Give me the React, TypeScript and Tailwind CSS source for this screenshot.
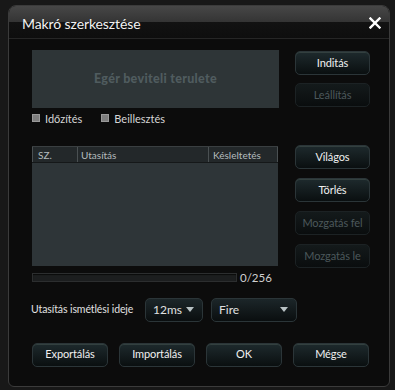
import React from "react";

const font = { fontFamily: "Lato, 'Noto Sans', sans-serif" };

function Btn({ label, disabled = false, w = "w-[75px]" }: { label: string; disabled?: boolean; w?: string }) {
  return (
    <div
      className={`${w} h-[24px] rounded-[5px] border flex items-center justify-center text-[11px] tracking-[-0.1px] ${
        disabled
          ? "border-[#1c2224] bg-[linear-gradient(to_bottom,#141a1b,#0a0d0e)] text-[#4c585b]"
          : "border-[#2b3538] bg-[linear-gradient(to_bottom,#1e2a2d,#0a0f10)] text-[#f0f0f0] shadow-[inset_0_1px_0_#33403f]"
      }`}
    >
      {label}
    </div>
  );
}

function Drop({ label, w }: { label: string; w: string }) {
  return (
    <div
      className={`${w} h-[24px] rounded-[5px] border border-[#2b3538] bg-[linear-gradient(to_bottom,#1c2629,#0a0e0f)] flex items-center justify-between pl-[7px] pr-[8px] text-[12px] text-[#e0e0e0]`}
    >
      <span>{label}</span>
      <svg width="8" height="5" viewBox="0 0 8 5">
        <path d="M0 0 H8 L4 5 Z" fill="#b8c2c4" />
      </svg>
    </div>
  );
}

function Check({ label }: { label: string }) {
  return (
    <div className="flex items-center gap-[5px]">
      <div className="w-[8px] h-[8px] bg-[#7e7e7e] border border-[#9a9a9a]" />
      <span className="text-[11px] text-[#d6d6d6] leading-none">{label}</span>
    </div>
  );
}

export default function App() {
  return (
    <div
      className="w-[395px] h-[390px] bg-[#181818] pt-[5px] pl-[8px] pr-[5px] pb-[3px]"
      style={font}
    >
      <div className="w-full h-full rounded-t-[8px] rounded-b-[6px] border border-[#3b3b3b] bg-[#0c0c0c] flex flex-col overflow-hidden">
        {/* Title bar */}
        <div className="h-[33px] shrink-0 bg-[linear-gradient(to_bottom,#474747_0%,#343434_50%,#121212_50%,#0e0e0e_100%)] border-b border-[#262626] flex items-center justify-between pl-[13px] pr-[8px]">
          <span className="text-[14px] text-[#f2f2f2] mt-[2px] tracking-[-0.1px]">Makró szerkesztése</span>
          <svg width="12" height="12" viewBox="0 0 12 12" className="mt-[2px]">
            <path d="M1.5 1.5 L10.5 10.5 M10.5 1.5 L1.5 10.5" stroke="#ffffff" strokeWidth="2.4" strokeLinecap="square" />
          </svg>
        </div>

        {/* Body */}
        <div className="flex-1 pl-[23px] pr-[19px] pt-[11px] flex flex-col">
          {/* Section A */}
          <div className="flex gap-[16px]">
            <div className="w-[247px] flex flex-col">
              <div className="h-[58px] bg-[#2e3537] flex items-center justify-center">
                <span className="text-[12.5px] font-black text-[#505c5f] tracking-[0.3px]">Egér beviteli terulete</span>
              </div>
              <div className="flex items-center gap-[19px] mt-[5px] h-[10px]">
                <Check label="Időzítés" />
                <Check label="Beillesztés" />
              </div>
            </div>
            <div className="flex flex-col gap-[8px] pt-[1px]">
              <Btn label="Inditás" />
              <Btn label="Leállítás" disabled />
            </div>
          </div>

          {/* Section B */}
          <div className="flex gap-[16px] mt-[23px]">
            <div className="w-[247px] flex flex-col">
              <div className="h-[120px] w-[246px] flex flex-col bg-[#2e3538] border-t border-[#3a3f41]">
                <div className="h-[16px] bg-[#23282a] border-b border-[#151819] flex items-center text-[10px] text-[#b4bcbe] leading-none">
                  <div className="w-[45px] h-full border-l border-[#4a5052] pl-[5px] flex items-center">SZ.</div>
                  <div className="w-[131px] h-full border-l border-[#4a5052] pl-[3px] flex items-center">Utasítás</div>
                  <div className="flex-1 h-full border-l border-r border-[#4a5052] pl-[4px] flex items-center">Késleltetés</div>
                </div>
              </div>
              <div className="flex items-center mt-[6px]">
                <div className="w-[205px] h-[9px] bg-[#1c1e1f] border border-[#2c2e2f] shadow-[inset_0_1px_1px_#0a0a0a]" />
                <span className="ml-[3px] text-[11.5px] text-[#d0d0d0] leading-none">0/256</span>
              </div>
            </div>
            <div className="flex flex-col gap-[9px] -mt-[1px]">
              <Btn label="Világos" />
              <Btn label="Törlés" />
              <Btn label="Mozgatás fel" disabled />
              <Btn label="Mozgatás le" disabled />
            </div>
          </div>

          {/* Section C */}
          <div className="flex items-center mt-[14px]">
            <span className="w-[114px] whitespace-nowrap text-[10.5px] text-[#e2e2e2] -ml-[1px] tracking-[-0.1px]">Utasítás ismétlési ideje</span>
            <Drop label="12ms" w="w-[58px]" />
            <div className="w-[8px]" />
            <Drop label="Fire" w="w-[86px]" />
          </div>

          {/* Section D */}
          <div className="flex mt-[21px] gap-[11px]">
            <Btn label="Exportálás" w="w-[76px]" />
            <Btn label="Importálás" w="w-[76px]" />
            <Btn label="OK" w="w-[76px]" />
            <Btn label="Mégse" w="w-[76px]" />
          </div>
        </div>
      </div>
    </div>
  );
}
